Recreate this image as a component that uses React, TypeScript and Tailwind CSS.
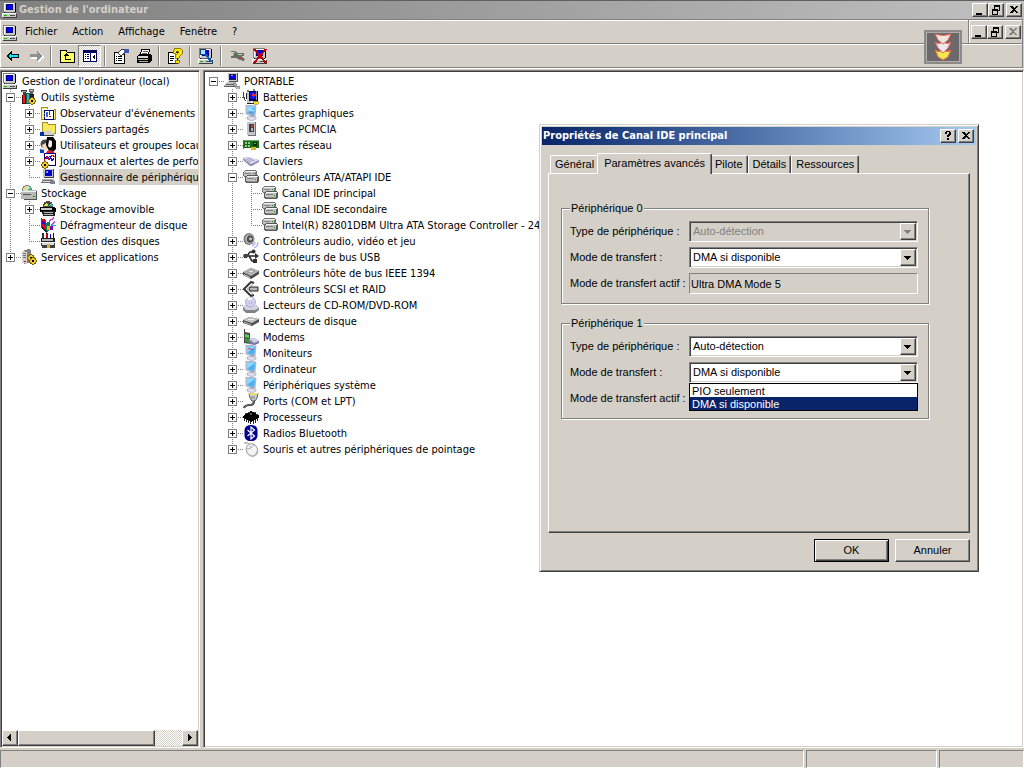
import { useState } from "react";
import type { ReactNode } from "react";
import clsx from "clsx";

const raised =
  "bg-[#d4d0c8] border border-t-white border-l-white border-r-[#404040] border-b-[#404040] shadow-[inset_-1px_-1px_0_#808080]";
const sunken =
  "border border-t-[#808080] border-l-[#808080] border-r-white border-b-white shadow-[inset_1px_1px_0_#404040,inset_-1px_-1px_0_#d4d0c8]";
const checker =
  "bg-[repeating-conic-gradient(#ffffff_0_25%,#d4d0c8_0_50%)] bg-[length:2px_2px]";

/* ---------- Icons ---------- */

function Svg({ children, crisp = true }: { children: ReactNode; crisp?: boolean }) {
  return (
    <svg viewBox="0 0 16 16" className="w-4 h-4 shrink-0" shapeRendering={crisp ? "crispEdges" : "auto"} aria-hidden="true">
      {children}
    </svg>
  );
}

const monitor = (
  <>
    <path d="M2 0h11v1h1v9h-1v1H2z" fill="#000" />
    <path d="M1 0h12v10H1z" fill="#c8c8c8" />
    <path d="M1 0h12v1H2v9H1z" fill="#808080" />
    <path d="M2 1h10v1H3v7H2z" fill="#fff" />
    <path d="M4 2h7v6H4z" fill="#000080" />
    <path d="M5 3h5v4H5z" fill="#0000ff" />
    <path d="M3 10h9v1H3z" fill="#606060" />
    <path d="M1 12h14v4H1z" fill="#404040" />
    <path d="M0 11h14v4H0z" fill="#c8c8c8" />
    <path d="M0 11h14v1H0zM0 11h1v4H0z" fill="#fff" />
    <path d="M2 13h3v1H2z" fill="#00c000" />
    <path d="M8 13h5v1H8z" fill="#505050" />
  </>
);

const tiltedMonitor = (
  <>
    <path d="M3 0l10 1-1 10-9-2z" fill="#b8c4dc" stroke="#8c94b0" strokeWidth=".6" />
    <path d="M4 1l8 1-1 8-7-2z" fill="#45b4f4" />
    <path d="M4 1l8 1-7 5-1 1z" fill="#8cd8fc" />
    <path d="M7 10l4 1 1 2H7z" fill="#8888a0" />
    <path d="M4 12l4-1 5 1v2l-4 2-5-2z" fill="#dcdce8" stroke="#9898b0" strokeWidth=".6" />
  </>
);

const driveBox = (
  <>
    <path d="M2 1h10l2 2v4l-1 1H1L0 7V3z" fill="#707070" />
    <path d="M3 2h9l1 1H1z" fill="#f0f0f0" />
    <path d="M1 3h11v4H1z" fill="#c0c0c0" />
    <path d="M2 4h6v1H2z" fill="#888" />
    <path d="M5 6h9l2 2v4l-2 2H4l-2-1V8z" fill="#585858" />
    <path d="M5 7h9l1 1H3z" fill="#f4f4f4" />
    <path d="M3 8h11v5H4l-1-1z" fill="#c0c0c0" />
    <path d="M4 9h7v1H4z" fill="#808080" />
    <path d="M4 12h10v1H4z" fill="#909090" />
    <path d="M12 10h1v1h-1z" fill="#00b000" />
    <path d="M10 4h1v1h-1z" fill="#00b000" />
  </>
);

const folder = (
  <>
    <path d="M1 4l1-2h5l1 2h7v10H1z" fill="#f8f080" stroke="#a89020" strokeWidth="1" />
    <path d="M2 4h12v1H2z" fill="#fff" />
  </>
);

const gear = (
  <g>
    <path d="M10 8h2v1h2v2h1v2h-1v2h-2v1h-2v-1H8v-2H7v-2h1V9h2z" fill="#806000" />
    <path d="M10 9h2v1h1v1h1v2h-1v1h-1v1h-2v-1H9v-1H8v-2h1v-1h1z" fill="#f0d020" />
    <path d="M10 11h2v2h-2z" fill="#000" />
  </g>
);

const icons: Record<string, ReactNode> = {
  computer: <Svg>{monitor}</Svg>,
  tools: (
    <Svg>
      <path d="M0 1h6v2H5v3H2V3H0z" fill="#404040" />
      <path d="M1 2h4v1H1z" fill="#a0a0a0" />
      <path d="M8 0h5v3h-1v3H9V3H8z" fill="#606060" />
      <path d="M9 1h3v1H9z" fill="#d0d0d0" />
      <path d="M1 6h4v9H1z" fill="#600000" />
      <path d="M2 6h2v8H2z" fill="#e02020" />
      <path d="M5 4h4v11H5z" fill="#006060" />
      <path d="M6 5h2v9H6z" fill="#40b0b0" />
      <path d="M9 5h4v6H9z" fill="#202020" />
      {gear}
    </Svg>
  ),
  events: (
    <Svg>
      {folder}
      <path d="M4 5h9v9H4z" fill="#fff" stroke="#000080" />
      <path d="M6 7h2v5H6z" fill="#4060ff" />
      <path d="M9 6h1v4H9zM9 11h2v1H9z" fill="#e00000" />
      <path d="M4 8h1v1H4zM4 11h1v1H4z" fill="#808080" />
    </Svg>
  ),
  shared: (
    <Svg>
      <path d="M2 1h5l1 2h7v9H2z" fill="#f8e860" stroke="#a89020" />
      <path d="M0 11h4v4H0z" fill="#0030a0" />
      <path d="M4 10l5-1 4 3 2 1v1H8l-4 1z" fill="#d0d0d0" />
      <path d="M4 14h10v1H4z" fill="#404040" />
    </Svg>
  ),
  users: (
    <Svg crisp={false}>
      <circle cx="5" cy="7" r="4.5" fill="#48484c" />
      <path d="M2 8l4-2 2 3-1 4-4 1z" fill="#f0d8c0" />
      <path d="M7 0h6l3 4v8l-3 3-4-1-3-6z" fill="#000" />
      <path d="M9 3l3 1v5l-2 2-2-2z" fill="#f8f0e8" />
      <path d="M0 12l4 1v3H0z" fill="#0040c0" />
      <path d="M7 14l4-1 4 3H6z" fill="#d02030" />
    </Svg>
  ),
  perf: (
    <Svg>
      <path d="M4 0h11v12H4z" fill="#fff" stroke="#000080" />
      <path d="M4 8l3-5 2 4 3-5 3 2" fill="none" stroke="#e00000" />
      <path d="M5 4l2 2 3-3 2 5 2-3" fill="none" stroke="#0000e0" />
      <g transform="translate(-6 0)">{gear}</g>
    </Svg>
  ),
  devmgr: (
    <Svg>
      <path d="M4 0h10v9H4z" fill="#404048" />
      <path d="M3 0h10v8H3z" fill="#c0c0c8" />
      <path d="M5 1h7v6H5z" fill="#0000d0" />
      <path d="M6 2h2v2H6z" fill="#80a0ff" />
      <path d="M2 10h12v3H2z" fill="#b0b0b0" />
      <path d="M1 13l2-2h10l1 2v1H1z" fill="#707070" />
      <path d="M3 12h9v1H3z" fill="#e0e0e0" />
      <path d="M10 12h5v3h-5z" fill="#808090" />
    </Svg>
  ),
  storage: (
    <Svg>
      <circle cx="6" cy="5" r="4.5" fill="#d8d8d8" stroke="#808080" />
      <path d="M2 3l4 2-2-4z" fill="#e8e040" />
      <path d="M6 5l4-3v3z" fill="#40c080" />
      <path d="M2 6h13l1 1v8H3z" fill="#505050" />
      <path d="M0 6h6l1-1h8v9H0z" fill="#b8b8b8" />
      <path d="M0 6h15v1H0z" fill="#f0f0f0" />
      <path d="M2 9h8v1H2z" fill="#505050" />
      <path d="M12 11h2v1h-2z" fill="#00b000" />
    </Svg>
  ),
  removable: (
    <Svg>
      <circle cx="8" cy="5" r="5" fill="#484848" />
      <path d="M4 5l4 0-1-4z" fill="#e8e040" />
      <path d="M8 5l4-3 1 3z" fill="#20d0a0" />
      <path d="M0 6h13l3 1v4H0z" fill="#000" />
      <path d="M1 7h11v2H1z" fill="#c8c8c8" />
      <path d="M2 10h13v5H3z" fill="#202020" />
      <path d="M4 11h9v1H4zM4 13h9v1H4z" fill="#b8b8b8" />
    </Svg>
  ),
  defrag: (
    <Svg>
      <path d="M1 1l5 2v11l-5-3z" fill="#e00020" />
      <path d="M2 4l3 1v3L2 7z" fill="#4000c0" />
      <path d="M6 6l4-2v9l-4 3z" fill="#008060" />
      <path d="M7 9h4v4H7z" fill="#e0c000" />
      <path d="M9 4l5-3M11 8l4-3" stroke="#c040e0" strokeWidth="1.5" />
      <path d="M10 9h3v4h-3z" fill="#8000c0" />
      <path d="M12 8h4v1h-4z" fill="#00c0e0" />
      <path d="M2 12l3 3h2l-5-5z" fill="#202020" />
    </Svg>
  ),
  disks: (
    <Svg>
      <path d="M2 0h2v6H2z" fill="#303030" />
      <path d="M6 0h2v6H6z" fill="#c00000" />
      <path d="M10 1h1v5h-1zM13 0h1v6h-1z" fill="#0000c0" />
      <path d="M1 5h14v4H1z" fill="#202020" />
      <path d="M2 6h11v2H2z" fill="#b8b8b8" />
      <path d="M1 10h14v5H2z" fill="#404040" />
      <path d="M2 10h12v2H2z" fill="#d8d8d8" />
      <path d="M7 11h3v4H7z" fill="#d0b840" />
    </Svg>
  ),
  services: (
    <Svg>
      <path d="M1 2l6-2 3 1v12l-5 2-4-1z" fill="#808080" />
      <path d="M1 2l5 1v12l-5-1z" fill="#d0d0d0" />
      <path d="M2 4h3v1H2zM2 6h3v1H2zM2 8h3v1H2z" fill="#707070" />
      <path d="M3 12h2v1H3z" fill="#e00000" />
      <g transform="translate(-1 -3)">{gear}</g>
      <g transform="translate(1 0)">{gear}</g>
    </Svg>
  ),
  portable: (
    <Svg>
      <path d="M5 0h9v9H5z" fill="#505058" />
      <path d="M4 0h9v8H4z" fill="#c8c8d0" />
      <path d="M5 1h7v6H5z" fill="#202040" />
      <path d="M6 2h5v4H6z" fill="#0000e0" />
      <path d="M7 2h2v1H7z" fill="#90b0ff" />
      <path d="M3 9h9l1 4H0v-1z" fill="#c0c0c0" />
      <path d="M2 11h8v1H2zM0 13h11v1H0z" fill="#606060" />
      <path d="M9 10l3 1 1 2h2v3h-2l-2-3-2-1z" fill="#b8b8b8" stroke="#606060" strokeWidth=".6" />
    </Svg>
  ),
  battery: (
    <Svg>
      <path d="M0 3h1v4l2 5H2L0 8z" fill="#404040" />
      <path d="M4 3h4v11H4z" fill="#c8c8d0" />
      <path d="M3 4h1v10h7v1H4z" fill="#202020" />
      <path d="M4 1h2v2H4zM10 0h2v2h-2z" fill="#808080" />
      <path d="M6 2h9v10H6z" fill="#000050" />
      <path d="M7 3h6v7H7z" fill="#1010e0" />
      <path d="M9 5h4v2H9zM10 4h1v4h-1z" fill="#ff2020" />
      <path d="M13 2h1v9h-1z" fill="#9090a0" />
      <path d="M10 12h5v3h-4z" fill="#f0e020" stroke="#706000" strokeWidth=".5" />
    </Svg>
  ),
  display: (
    <Svg crisp={false}>
      {tiltedMonitor}
      <path d="M6 4l3 2 2-1" stroke="#e8f8ff" strokeWidth="1" fill="none" />
      <path d="M7 7h2v1H7z" fill="#d06090" />
    </Svg>
  ),
  monitors: (
    <Svg crisp={false}>
      {tiltedMonitor}
      <path d="M5 4l2-1 1 2 3-1" stroke="#c04080" strokeWidth=".9" fill="none" />
    </Svg>
  ),
  pc: <Svg crisp={false}>{tiltedMonitor}</Svg>,
  pcmcia: (
    <Svg>
      <path d="M5 1h8v14H5z" fill="#707078" />
      <path d="M4 1h8v13H4z" fill="#c4c4cc" />
      <path d="M6 3h5v8H6z" fill="#404048" />
      <path d="M8 4h2v2H8z" fill="#e04020" />
      <path d="M8 7h2v3H8z" fill="#b0b0b8" />
    </Svg>
  ),
  network: (
    <Svg>
      <path d="M0 3h1v9H0z" fill="#606060" />
      <path d="M1 3h15v8H1z" fill="#186818" />
      <path d="M1 3h15v1H1z" fill="#60b060" />
      <path d="M2 5h2v2H2zM5 5h2v2H5zM2 8h2v2H2zM5 8h2v2H5z" fill="#90c890" />
      <path d="M10 5h4v4h-4z" fill="#083008" />
      <path d="M11 6h2v1h-2z" fill="#60b060" />
      <path d="M8 10h5v3H8z" fill="#d8b820" />
    </Svg>
  ),
  keyboard: (
    <Svg crisp={false}>
      <path d="M0 5l5-1 11 3v2l-7 4-2 0-7-6z" fill="#9090b8" />
      <path d="M0 5l5-1 11 3-8 4z" fill="#e0e0f4" />
      <path d="M2 6l6 3M4 5l6 3M6 5l6 3M3 7l4-2M6 9l6-2M5 8l4-2" stroke="#a0a0c0" strokeWidth=".6" />
    </Svg>
  ),
  ide: <Svg>{driveBox}</Svg>,
  audio: (
    <Svg crisp={false}>
      <ellipse cx="6" cy="6" rx="5.5" ry="6" fill="#787878" />
      <ellipse cx="6.5" cy="6" rx="4.2" ry="4.8" fill="#c0c0c0" />
      <ellipse cx="7" cy="6" rx="3.2" ry="3.8" fill="#505050" />
      <circle cx="7.5" cy="6" r="1.4" fill="#d0d0d0" />
      <path d="M9 13q3-1 3-4M11 15q4-2 4-6" stroke="#a0a8f0" strokeWidth="1.2" fill="none" />
    </Svg>
  ),
  usb: (
    <Svg crisp={false}>
      <path d="M2 7h12M4 7l3-4h3M6 7l3 5h2" stroke="#282828" strokeWidth="1.5" fill="none" />
      <circle cx="2.5" cy="7" r="2.3" fill="#404040" />
      <circle cx="10.5" cy="2.5" r="2" fill="#303030" />
      <path d="M10 10h4v4h-4z" fill="#303030" />
      <path d="M12 4l4 3-4 3z" fill="#303030" />
    </Svg>
  ),
  firewire: (
    <Svg crisp={false}>
      <path d="M0 7l8-4 8 3v3l-8 5-8-4z" fill="#484848" />
      <path d="M0 7l8-4 8 3-8 5z" fill="#b8b8b8" />
      <path d="M4 7l4-2 4 1-4 2z" fill="#e8e8e8" stroke="#707070" strokeWidth=".5" />
      <path d="M1 9l6 3v1l-6-3z" fill="#e0e0e0" />
    </Svg>
  ),
  scsi: (
    <Svg crisp={false}>
      <path d="M11 2L8 1 1 8l7 7 3-1" fill="none" stroke="#383838" strokeWidth="2" />
      <path d="M10 3L4 8l6 5" fill="none" stroke="#b0b0b0" strokeWidth="1" />
      <path d="M7 6h8v4H7L6 8z" fill="#b8b8b8" stroke="#202020" />
    </Svg>
  ),
  cd: (
    <Svg crisp={false}>
      <path d="M0 10l3-2h10l3 3v2l-4 3H3l-3-3z" fill="#808088" />
      <path d="M0 10l3-2h10l3 3-4 2H3z" fill="#d4d4dc" />
      <circle cx="7.5" cy="5" r="5" fill="#d0d0f8" stroke="#9898c8" strokeWidth=".7" />
      <path d="M7.5 5L4 1.5q3-2 5-.5z" fill="#fff" />
      <circle cx="7.5" cy="5" r="1.4" fill="#fff" stroke="#8080b0" strokeWidth=".6" />
    </Svg>
  ),
  disk: (
    <Svg crisp={false}>
      <path d="M0 7l6-3 10 2v3l-7 4-9-3z" fill="#505050" />
      <path d="M0 7l6-3 10 2-7 4z" fill="#c8c8c8" />
      <ellipse cx="8" cy="6.5" rx="3.5" ry="1.3" fill="#efefef" stroke="#909090" strokeWidth=".5" />
      <path d="M1 8.5l7 2.5v1l-7-2z" fill="#a0a0a0" />
    </Svg>
  ),
  modem: (
    <Svg crisp={false}>
      <path d="M1 0h1v3l5 1v11l-6-1z" fill="#484850" />
      <path d="M2 5l4 1v3L2 8z" fill="#50d850" />
      <path d="M2 9l4 1v4l-4-1z" fill="#409040" />
      <path d="M6 10l5-1 5 3v2l-4 2-6-1z" fill="#7878a0" />
      <path d="M6 10l5-1 5 3-5 2z" fill="#d0d0e8" />
    </Svg>
  ),
  port: (
    <Svg crisp={false}>
      <path d="M6 0h9l-1 5-2 3H9L7 5z" fill="#d0d0d0" stroke="#303030" strokeWidth=".8" />
      <path d="M6 0h9v1.5H6z" fill="#f0e040" />
      <path d="M9 3v3M11 3v3" stroke="#808080" />
      <path d="M11 8q0 4-4 4-5 0-6 3" fill="none" stroke="#303030" strokeWidth="2.2" />
      <path d="M11 8q0 4-4 4-5 0-6 3" fill="none" stroke="#a0a0a0" strokeWidth=".6" />
    </Svg>
  ),
  cpu: (
    <Svg>
      <path d="M0 7l8-5 8 4v3l-8 4-8-4z" fill="#000" />
      <path d="M1 9v3M3 10v3M5 11v3M7 12v3M10 12v3M12 11v3M14 9v3" stroke="#202020" strokeWidth="1" />
      <path d="M2 4h2M5 3h2M11 3h2M13 5h2" stroke="#404040" />
      <path d="M6 5l2-1 2 1-2 1z" fill="#505050" />
    </Svg>
  ),
  bluetooth: (
    <Svg crisp={false}>
      <rect x="1.5" y="0" width="13" height="16" rx="5.5" fill="#00008c" />
      <path d="M4.500 5l7 6L8 14V2l3.500 3-7 6" fill="none" stroke="#fff" strokeWidth="1.2" />
    </Svg>
  ),
  mouse: (
    <Svg crisp={false}>
      <path d="M1 2q4-1 6 2" stroke="#808080" fill="none" />
      <ellipse cx="9" cy="9" rx="5.5" ry="6.5" transform="rotate(-30 9 9)" fill="#f4f4f4" stroke="#a0a0a0" strokeWidth="1" />
      <path d="M3 8q4 1 8-4M7 5l1 2" stroke="#a0a0a0" strokeWidth=".8" fill="none" />
      <path d="M8 15q6 0 6-5" stroke="#b8b8c0" strokeWidth="1.5" fill="none" />
    </Svg>
  ),
  back: (
    <Svg>
      <path d="M7 3v3h7v4H7v3H6L1 8l5-5z" fill="#000" />
      <path d="M6 5v2h7v2H6v2L3 8z" fill="#00f0ff" />
    </Svg>
  ),
  forward: (
    <Svg>
      <path d="M10 4v3H3v4h7v3h1l5-5-5-5z" fill="#fff" />
      <path d="M9 3v3H2v3h7v4h1l4-5-4-5z" fill="#909090" />
    </Svg>
  ),
  up: (
    <Svg>
      <path d="M1 4l1-2h5l1 2h7v10H1z" fill="#ffff60" stroke="#000" />
      <path d="M7 6v5h5v1H6V6z" fill="#000" />
      <path d="M4 8l3-3 3 3z" fill="#000" />
    </Svg>
  ),
  tree: (
    <Svg>
      <path d="M1 2h14v12H1z" fill="#000060" />
      <path d="M2 5h6v8H2zM9 5h5v8H9z" fill="#fff" />
      <path d="M3 6h1v1H3zM5 6h2v1H5zM3 8h1v1H3zM5 8h2v1H5zM3 10h1v1H3zM5 10h2v1H5z" fill="#000060" />
      <path d="M13 6v6l-3-3z" fill="#000" />
    </Svg>
  ),
  props: (
    <Svg>
      <path d="M1 4h10v11H1z" fill="#fff" stroke="#000" />
      <path d="M3 8h1v1H3zM5 8h4v1H5zM3 10h1v1H3zM5 10h4v1H5zM3 12h1v1H3zM5 12h4v1H5z" fill="#000" />
      <path d="M5 5l4-4h3v4l-3 2H7z" fill="#fff" stroke="#404040" />
      <path d="M11 1h5v4h-5z" fill="#4058a8" />
    </Svg>
  ),
  print: (
    <Svg>
      <path d="M6 1h8l-2 6H4z" fill="#fff" stroke="#000" />
      <path d="M7 3h5M6 5h5" stroke="#606060" />
      <path d="M1 8l3-2h10l2 2v4l-3 3H1z" fill="#000" />
      <path d="M2 8h10v2H2z" fill="#d8d8d8" />
      <path d="M2 11h10v1H2zM3 13h9v1H3z" fill="#b0b0b0" />
      <path d="M9 11h2v1H9z" fill="#e0d000" />
    </Svg>
  ),
  help: (
    <Svg>
      <path d="M1 4h9v11H1z" fill="#fff" stroke="#000" />
      <path d="M3 8h4v1H3zM3 10h4v1H3zM3 12h3v1H3z" fill="#000" />
      <path d="M6 3l2-3h5l2 2v4l-3 3v1H8V7l3-2V3H9v2H6z" fill="#ffe800" stroke="#605000" strokeWidth=".7" />
      <path d="M8 12h4v3H8z" fill="#ffe800" stroke="#605000" strokeWidth=".7" />
    </Svg>
  ),
  scan: (
    <Svg>
      {monitor}
      <circle cx="5" cy="4" r="3" fill="#a0e8ff" stroke="#204060" />
      <path d="M7 6l7 8" stroke="#0060c0" strokeWidth="2" />
    </Svg>
  ),
  disable: (
    <Svg>
      <path d="M1 3h5l3 2h6v3h-3l4 3-2 2-7-3H2V8l3-1z" fill="#687068" />
      <path d="M3 4h3v1H3zM8 6h5v1H8z" fill="#c8d0c8" />
      <path d="M6 6h3v2H6z" fill="#309030" />
      <path d="M10 9l3 2" stroke="#b04040" />
    </Svg>
  ),
  uninstall: (
    <Svg>
      {monitor}
      <path d="M2 1l12 14M14 1L2 15" stroke="#c00000" strokeWidth="2" />
    </Svg>
  ),
};

/* ---------- Tree ---------- */

type Node = {
  icon: string;
  label: string;
  // one entry per indent column
  guides?: ("line" | "none")[];
  // the column just before the icon
  branch?: "plus" | "minus" | "leaf" | "root";
  last?: boolean;
  selected?: boolean;
};

const consoleTree: Node[] = [
  { icon: "computer", label: "Gestion de l'ordinateur (local)" },
  { icon: "tools", label: "Outils système", branch: "minus" },
  { icon: "events", label: "Observateur d'événements", guides: ["line"], branch: "plus" },
  { icon: "shared", label: "Dossiers partagés", guides: ["line"], branch: "plus" },
  { icon: "users", label: "Utilisateurs et groupes locaux", guides: ["line"], branch: "plus" },
  { icon: "perf", label: "Journaux et alertes de performance", guides: ["line"], branch: "plus" },
  { icon: "devmgr", label: "Gestionnaire de périphériques", guides: ["line"], branch: "leaf", last: true, selected: true },
  { icon: "storage", label: "Stockage", branch: "minus" },
  { icon: "removable", label: "Stockage amovible", guides: ["line"], branch: "plus" },
  { icon: "defrag", label: "Défragmenteur de disque", guides: ["line"], branch: "leaf" },
  { icon: "disks", label: "Gestion des disques", guides: ["line"], branch: "leaf", last: true },
  { icon: "services", label: "Services et applications", branch: "plus", last: true },
];

const deviceTree: Node[] = [
  { icon: "portable", label: "PORTABLE", branch: "root" },
  { icon: "battery", label: "Batteries", guides: ["none"], branch: "plus" },
  { icon: "display", label: "Cartes graphiques", guides: ["none"], branch: "plus" },
  { icon: "pcmcia", label: "Cartes PCMCIA", guides: ["none"], branch: "plus" },
  { icon: "network", label: "Cartes réseau", guides: ["none"], branch: "plus" },
  { icon: "keyboard", label: "Claviers", guides: ["none"], branch: "plus" },
  { icon: "ide", label: "Contrôleurs ATA/ATAPI IDE", guides: ["none"], branch: "minus" },
  { icon: "ide", label: "Canal IDE principal", guides: ["none", "line"], branch: "leaf" },
  { icon: "ide", label: "Canal IDE secondaire", guides: ["none", "line"], branch: "leaf" },
  { icon: "ide", label: "Intel(R) 82801DBM Ultra ATA Storage Controller - 24CA", guides: ["none", "line"], branch: "leaf", last: true },
  { icon: "audio", label: "Contrôleurs audio, vidéo et jeu", guides: ["none"], branch: "plus" },
  { icon: "usb", label: "Contrôleurs de bus USB", guides: ["none"], branch: "plus" },
  { icon: "firewire", label: "Contrôleurs hôte de bus IEEE 1394", guides: ["none"], branch: "plus" },
  { icon: "scsi", label: "Contrôleurs SCSI et RAID", guides: ["none"], branch: "plus" },
  { icon: "cd", label: "Lecteurs de CD-ROM/DVD-ROM", guides: ["none"], branch: "plus" },
  { icon: "disk", label: "Lecteurs de disque", guides: ["none"], branch: "plus" },
  { icon: "modem", label: "Modems", guides: ["none"], branch: "plus" },
  { icon: "monitors", label: "Moniteurs", guides: ["none"], branch: "plus" },
  { icon: "pc", label: "Ordinateur", guides: ["none"], branch: "plus" },
  { icon: "pc", label: "Périphériques système", guides: ["none"], branch: "plus" },
  { icon: "port", label: "Ports (COM et LPT)", guides: ["none"], branch: "plus" },
  { icon: "cpu", label: "Processeurs", guides: ["none"], branch: "plus" },
  { icon: "bluetooth", label: "Radios Bluetooth", guides: ["none"], branch: "plus" },
  { icon: "mouse", label: "Souris et autres périphériques de pointage", guides: ["none"], branch: "plus", last: true },
];

function Branch({ kind, last }: { kind: string; last?: boolean }) {
  const boxed = kind !== "leaf" && kind !== "line";
  return (
    <svg viewBox="0 0 19 16" className="w-[19px] h-4 shrink-0" shapeRendering="crispEdges" aria-hidden="true">
      {kind !== "root" && (
        <path d={last ? "M8.500 0v9" : "M8.500 0v16"} stroke="#808080" strokeDasharray="1 1" />
      )}
      {kind !== "line" && <path d="M8 8.500h11" stroke="#808080" strokeDasharray="1 1" />}
      {boxed && (
        <>
          <rect x="4.5" y="4.5" width="8" height="8" fill="#fff" stroke="#808080" />
          <path d={kind === "plus" ? "M6 8.500h5M8.500 6v5" : "M6 8.500h5"} stroke="#000" />
        </>
      )}
    </svg>
  );
}

function Tree({ nodes, label }: { nodes: Node[]; label: string }) {
  return (
    <ul role="tree" aria-label={label} className="pt-px">
      {nodes.map((node) => (
        <li key={node.label} role="treeitem" aria-selected={!!node.selected} className="flex h-4 items-center whitespace-nowrap">
          {node.guides?.map((guide, i) =>
            guide === "line" ? <Branch key={i} kind="line" /> : <span key={i} className="w-[19px] shrink-0" />
          )}
          {node.branch && <Branch kind={node.branch} last={node.last} />}
          {icons[node.icon]}
          <span className={clsx("ml-[3px] h-4 px-px leading-[18px]", node.selected && "bg-[#d4d0c8]")}>{node.label}</span>
        </li>
      ))}
    </ul>
  );
}

/* ---------- Small controls ---------- */

const glyphs: Record<string, ReactNode> = {
  min: <path d="M3 9h6v2H3z" />,
  restore: <path d="M5 1h6v6H9v4H3V5h2zM6 3v2h3v1h1V3zM4 7v3h4V7z" fillRule="evenodd" />,
  close: <path d="M3 2h2l2 2 2-2h2L8 5.500 11 9H9L7 7 5 9H3l3-3.500z" />,
  help: <path d="M4 2h1V1h4v1h1v3H9v1H8v1H6V5h1V4h1V2H6v2H4zM6 8h2v2H6z" />,
};

function CaptionButton({ glyph, label, dim }: { glyph: string; label: string; dim?: boolean }) {
  return (
    <button type="button" aria-label={label} className={clsx("flex w-4 h-[14px] items-center justify-center", raised)}>
      <svg viewBox="0 0 14 12" className={clsx("w-[14px] h-3", dim ? "fill-[#808080]" : "fill-black")} shapeRendering="crispEdges">
        {glyphs[glyph]}
      </svg>
    </button>
  );
}

function Arrow({ d }: { d: string }) {
  return (
    <svg viewBox="0 0 8 8" className="w-2 h-2 fill-current" shapeRendering="crispEdges" aria-hidden="true">
      <path d={d} />
    </svg>
  );
}

function ToolButton({ icon, label, pressed }: { icon: string; label: string; pressed?: boolean }) {
  return (
    <button
      type="button"
      aria-label={label}
      className={clsx(
        "flex w-[23px] h-[22px] items-center justify-center",
        pressed && ["border border-t-[#808080] border-l-[#808080] border-r-white border-b-white", checker]
      )}
    >
      {icons[icon]}
    </button>
  );
}

function Divider() {
  return <span className="mx-[3px] w-0.5 h-5 border-l border-l-[#808080] border-r border-r-white" />;
}

function ComboRow(props: {
  id: string;
  label: string;
  value: string;
  options: string[];
  disabled?: boolean;
  open?: boolean;
  onToggle?: () => void;
  onPick?: (value: string) => void;
}) {
  const { id, label, value, options, disabled, open, onToggle, onPick } = props;
  return (
    <div className="flex h-[21px] items-center">
      <label htmlFor={id} className="w-[119px] shrink-0">{label}</label>
      <div className="relative flex-1">
        <select
          id={id}
          value={value}
          disabled={disabled}
          onMouseDown={(e) => {
            if (onToggle) {
              e.preventDefault();
              onToggle();
            }
          }}
          onChange={(e) => onPick?.(e.target.value)}
          className={clsx(
            "block w-full h-[21px] appearance-none rounded-none pl-[3px] opacity-100 outline-none",
            sunken,
            disabled ? "bg-[#d4d0c8] text-[#808080]" : "bg-white text-black"
          )}
        >
          {options.map((o) => (
            <option key={o}>{o}</option>
          ))}
        </select>
        <span
          className={clsx(
            "pointer-events-none absolute right-0.5 top-0.5 flex w-4 h-[17px] items-center justify-center",
            raised,
            disabled && "text-[#808080]"
          )}
        >
          <Arrow d="M0 2h7v1H6v1H5v1H4v1H3V5H2V4H1V3H0z" />
        </span>
        {open && (
          <ul role="listbox" className="absolute left-0 top-[21px] z-10 w-full border border-black bg-white">
            {options.map((o) => (
              <li
                key={o}
                role="option"
                aria-selected={o === value}
                onClick={() => onPick?.(o)}
                className={clsx("h-[13px] pl-0.5 leading-[14px]", o === value && "bg-[#0a246a] text-white")}
              >
                {o}
              </li>
            ))}
          </ul>
        )}
      </div>
    </div>
  );
}

function Device({ index, children, active }: { index: number; children: ReactNode; active: string }) {
  return (
    <fieldset className="min-w-0 border border-[#808080] pl-2 pr-[10px] pb-[9px] shadow-[1px_1px_0_#fff,inset_1px_1px_0_#fff]">
      <legend className="h-[13px] bg-[#d4d0c8] px-px leading-[13px]">Périphérique {index}</legend>
      <div className="flex flex-col gap-[5px] pt-1.5">
        {children}
        <div className="flex h-[21px] items-center">
          <label htmlFor={`active-${index}`} className="w-[119px] shrink-0 whitespace-nowrap">
            Mode de transfert actif :
          </label>
          <input
            id={`active-${index}`}
            readOnly
            value={active}
            className="h-[21px] min-w-0 flex-1 border border-t-[#808080] border-l-[#808080] border-r-white border-b-white pl-px outline-none"
          />
        </div>
      </div>
    </fieldset>
  );
}

/* ---------- Properties dialog ---------- */

const tabs = ["Général", "Paramètres avancés", "Pilote", "Détails", "Ressources"];
const types = ["Auto-détection", "Aucun"];
const modes = ["PIO seulement", "DMA si disponible"];

function PropertiesDialog() {
  const [tab, setTab] = useState("Paramètres avancés");
  const [type1, setType1] = useState(types[0]);
  const [mode0, setMode0] = useState(modes[1]);
  const [mode1, setMode1] = useState(modes[1]);
  const [open, setOpen] = useState(true);

  return (
    <section
      role="dialog"
      aria-labelledby="dialog-title"
      className="absolute left-[539px] top-[124px] w-[440px] border border-t-[#d4d0c8] border-l-[#d4d0c8] border-r-[#404040] border-b-[#404040] bg-[#d4d0c8] p-0.5 font-['Liberation_Sans',Arial,sans-serif] text-[11px] shadow-[inset_1px_1px_0_#fff,inset_-1px_-1px_0_#808080]"
    >
      <header className="flex h-[18px] items-center bg-linear-to-r from-[#0a246a] to-[#a6caf0] pl-px pr-0.5">
        <h2 id="dialog-title" className="flex-1 font-['DejaVu_Sans_Condensed','DejaVu_Sans',sans-serif] font-bold text-white">
          Propriétés de Canal IDE principal
        </h2>
        <div className="flex gap-0.5">
          <CaptionButton glyph="help" label="Aide" />
          <CaptionButton glyph="close" label="Fermer" />
        </div>
      </header>

      <div className="px-1.5 pt-2 pb-[7px]">
        <div role="tablist" className="flex items-end pl-0.5 h-5">
          {tabs.map((t) => (
            <button
              key={t}
              type="button"
              role="tab"
              aria-selected={t === tab}
              onClick={() => setTab(t)}
              className={clsx(
                "whitespace-nowrap rounded-t-[2px] border border-b-0 border-t-white border-l-white border-r-[#404040] bg-[#d4d0c8] shadow-[inset_-1px_0_0_#808080]",
                t === tab ? "relative -mx-0.5 -mb-px h-[21px] px-1.5 pb-0.5" : "h-[18px] px-1"
              )}
            >
              {t}
            </button>
          ))}
        </div>
        <div
          role="tabpanel"
          className="flex min-h-[360px] flex-col gap-[13px] border border-t-white border-l-white border-r-[#404040] border-b-[#404040] pt-7 pl-3 pr-10 shadow-[inset_-1px_-1px_0_#808080]"
        >
          <Device index={0} active="Ultra DMA Mode 5">
            <ComboRow id="type0" label="Type de périphérique :" value={types[0]} options={types} disabled />
            <ComboRow id="mode0" label="Mode de transfert :" value={mode0} options={modes} onPick={setMode0} />
          </Device>
          <Device index={1} active="">
            <ComboRow id="type1" label="Type de périphérique :" value={type1} options={types} onPick={setType1} />
            <ComboRow
              id="mode1"
              label="Mode de transfert :"
              value={mode1}
              options={modes}
              open={open}
              onToggle={() => setOpen(!open)}
              onPick={(v) => {
                setMode1(v);
                setOpen(false);
              }}
            />
          </Device>
        </div>
        <footer className="flex justify-end gap-1.5 pt-1.5">
          <button
            type="button"
            className="w-[75px] h-[23px] border border-black bg-[#d4d0c8] shadow-[inset_1px_1px_0_#fff,inset_-1px_-1px_0_#404040,inset_-2px_-2px_0_#808080]"
          >
            OK
          </button>
          <button type="button" className={clsx("w-[75px] h-[23px]", raised)}>
            Annuler
          </button>
        </footer>
      </div>
    </section>
  );
}

/* ---------- Main window ---------- */

export default function App() {
  return (
    <div className="relative flex h-screen w-full flex-col overflow-hidden bg-[#d4d0c8] font-['DejaVu_Sans_Condensed','DejaVu_Sans',sans-serif] text-[11px] text-black">
      <header className="flex h-[19px] shrink-0 items-center border-t border-t-[#606060] bg-linear-to-r from-[#808080] to-[#c0c0c0] pl-0.5 pr-0.5">
        {icons.computer}
        <h1 className="ml-px flex-1 font-bold text-[#d4d0c8]">Gestion de l'ordinateur</h1>
        <div className="flex">
          <CaptionButton glyph="min" label="Réduire" />
          <CaptionButton glyph="restore" label="Restaurer" />
          <span className="w-0.5" />
          <CaptionButton glyph="close" label="Fermer" />
        </div>
      </header>

      <div className="mr-px flex h-6 shrink-0 border border-r-[#808080] border-l-white border-t-[#808080] border-b-0 shadow-[inset_0_1px_0_#fff]">
        <nav className="flex flex-1 items-center pl-px pt-0.5">
          {icons.computer}
          {["Fichier", "Action", "Affichage", "Fenêtre", "?"].map((item, i) => (
            <button key={item} type="button" className={clsx("h-5 pr-[7px]", i === 0 ? "pl-[7px]" : "pl-2")}>
              {item}
            </button>
          ))}
        </nav>
        <div className="flex items-center border-l border-l-[#808080] pl-0.5 pr-px shadow-[inset_1px_0_0_#fff]">
          <CaptionButton glyph="min" label="Réduire la fenêtre" />
          <CaptionButton glyph="restore" label="Restaurer la fenêtre" />
          <span className="w-0.5" />
          <CaptionButton glyph="close" label="Fermer la fenêtre" dim />
        </div>
      </div>

      <div
        role="toolbar"
        className="mr-px flex h-[25px] shrink-0 items-center border border-t-[#808080] border-b-[#808080] border-l-white border-r-[#808080] shadow-[inset_0_1px_0_#fff,0_1px_0_#fff]"
      >
        <ToolButton icon="back" label="Précédent" />
        <ToolButton icon="forward" label="Suivant" />
        <Divider />
        <ToolButton icon="up" label="Dossier parent" />
        <ToolButton icon="tree" label="Arborescence" pressed />
        <Divider />
        <ToolButton icon="props" label="Propriétés" />
        <ToolButton icon="print" label="Imprimer" />
        <Divider />
        <ToolButton icon="help" label="Aide" />
        <Divider />
        <ToolButton icon="scan" label="Rechercher les modifications" />
        <Divider />
        <ToolButton icon="disable" label="Désactiver" />
        <ToolButton icon="uninstall" label="Désinstaller" />
      </div>

      <main className="mt-0.5 flex min-h-0 flex-1 gap-[3px]">
        <aside className={clsx("flex w-[200px] shrink-0 flex-col bg-white p-px", sunken)}>
          <div className="min-h-0 flex-1 overflow-hidden">
            <Tree nodes={consoleTree} label="Console" />
          </div>
          <div className={clsx("flex h-4 shrink-0", checker)}>
            <button type="button" aria-label="Défiler à gauche" className={clsx("flex w-4 items-center justify-center", raised)}>
              <Arrow d="M5 0v7H4V6H3V5H2V4H1V3h1V2h1V1h1V0z" />
            </button>
            <div className={clsx("w-[137px]", raised)} />
            <div className="flex-1" />
            <button type="button" aria-label="Défiler à droite" className={clsx("flex w-4 items-center justify-center", raised)}>
              <Arrow d="M2 0v7h1V6h1V5h1V4h1V3H5V2H4V1H3V0z" />
            </button>
          </div>
        </aside>
        <section className={clsx("min-w-0 flex-1 overflow-hidden bg-white p-px", sunken)}>
          <Tree nodes={deviceTree} label="Périphériques" />
        </section>
      </main>

      <footer className="mt-0.5 flex h-[18px] shrink-0 gap-0.5">
        <div className="flex-1 border border-t-[#808080] border-l-[#808080] border-r-white border-b-white" />
        <div className="w-[131px] border border-t-[#808080] border-l-[#808080] border-r-white border-b-white" />
        <div className="w-[85px] border border-t-[#808080] border-l-[#808080] border-r-white border-b-white" />
      </footer>

      {/* Floating download badge */}
      <div className="absolute right-[62px] top-[30px] flex h-[34px] w-[38px] items-center justify-center border-2 border-[#8c8a88] bg-[#6b696b] shadow-[inset_0_0_0_1px_#b0aca8]">
        <svg viewBox="0 0 20 28" className="w-5 h-7" aria-hidden="true">
          <g stroke="#f06050" strokeWidth="1">
            <path d="M2 17q3 3 8 0 5 3 8 0l-3 7-5 3-5-3z" fill="#f0e850" />
            <path d="M2 9q3 3 8 0 5 3 8 0l-3 6-5 5-5-5z" fill="#ece8ec" />
            <path d="M2 1q8 3 16 0l-3 6-5 4-5-4z" fill="#ece8e0" />
          </g>
        </svg>
      </div>

      <PropertiesDialog />
    </div>
  );
}
